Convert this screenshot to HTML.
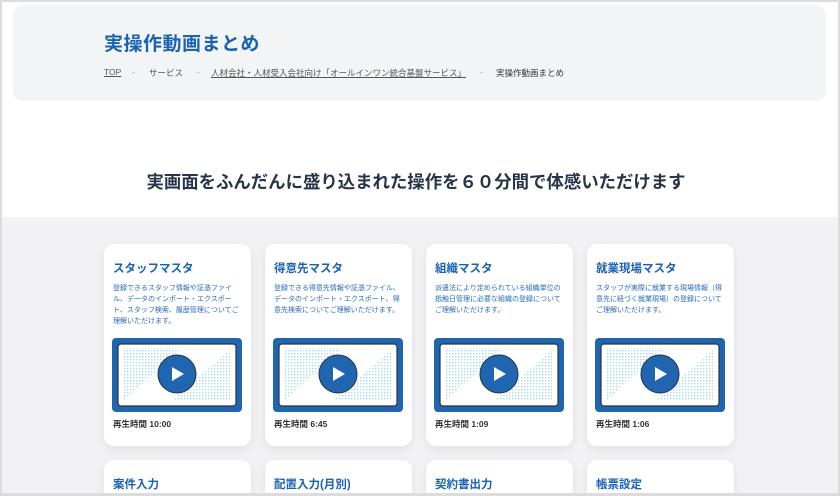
<!DOCTYPE html>
<html><head><meta charset="utf-8"><style>
*{margin:0;padding:0;box-sizing:border-box}
html,body{width:840px;height:496px;overflow:hidden}
body{background:#fff;font-family:"Liberation Sans","Noto Sans CJK JP",sans-serif;position:relative}
.frame{position:absolute;left:0;top:0;width:840px;height:496px;border:2px solid #dcdcdc;border-bottom-width:3px;pointer-events:none;z-index:5}
.hdr{position:absolute;left:13px;top:5px;width:813px;height:96px;background:#f3f4f6;border-radius:10px}
.ttl{position:absolute;left:104px;top:29px;font-size:19px;font-weight:bold;color:#1a62b3;letter-spacing:0.5px;white-space:nowrap}
.bc{position:absolute;left:104px;top:67px;font-size:8.5px;color:#555;white-space:nowrap}
.bc span{position:absolute;white-space:nowrap}
.u{text-decoration:underline;color:#555}
.h2{position:absolute;left:0;width:832px;top:169px;text-align:center;font-size:17.4px;letter-spacing:0;font-weight:bold;color:#283548;white-space:nowrap}
.sec{position:absolute;left:0;top:217px;width:840px;height:279px;background:#f2f2f4}
.card{position:absolute;width:147px;background:#fff;border-radius:10px;box-shadow:0 3px 10px rgba(0,0,0,.08)}
.card h3{position:absolute;left:9px;top:16px;font-size:11.5px;color:#1a62b3;font-weight:bold;white-space:nowrap}
.card p{position:absolute;left:9px;top:39px;width:130px;font-size:7px;line-height:11px;color:#2a6bb8}
.vid{position:absolute;left:8px;top:94px;width:130px;height:74px;background:#1f65b0;border-radius:4px}
.vid svg{position:absolute;left:0;top:0}
.tm{position:absolute;left:9px;top:174px;font-size:8.5px;font-weight:bold;color:#333;white-space:nowrap}
</style></head><body>
<div class="frame"></div>
<div class="hdr"></div>
<div class="ttl">実操作動画まとめ</div>
<div class="bc">
<span class="u" style="left:0">TOP</span>
<span style="left:28px;color:#999">-</span>
<span style="left:45px">サービス</span>
<span style="left:93px;color:#999">-</span>
<span class="u" style="left:107px">人材会社・人材受入会社向け「オールインワン統合基盤サービス」</span>
<span style="left:376px;color:#999">-</span>
<span style="left:392px;color:#333">実操作動画まとめ</span>
</div>
<div class="h2">実画面をふんだんに盛り込まれた操作を６０分間で体感いただけます</div>
<div class="sec"></div>

<svg width="0" height="0" style="position:absolute"><defs>
<pattern id="dots" width="3" height="3" patternUnits="userSpaceOnUse"><rect width="1.4" height="1.4" fill="#a9dbe6"/></pattern>
<symbol id="v" viewBox="0 0 130 74">
<rect x="6" y="6" width="118" height="62" rx="3" fill="#fff" stroke="#2a3340" stroke-width="1.2"/>
<polygon points="12,10 70,10 12,62" fill="url(#dots)"/>
<polygon points="118,12 118,62 60,62" fill="url(#dots)"/>
<circle cx="65" cy="36" r="19" fill="#1f65b0" stroke="#2a3340" stroke-width="1"/>
<polygon points="60,29 60,43 72,36" fill="#fff"/>
</symbol></defs></svg>

<div class="card" style="left:104px;top:244px;height:202px">
<h3>スタッフマスタ</h3>
<p>登録できるスタッフ情報や証憑ファイル、データのインポート・エクスポート、スタッフ検索、履歴管理についてご理解いただけます。</p>
<div class="vid"><svg width="130" height="74"><use href="#v"/></svg></div>
<div class="tm">再生時間 10:00</div></div>

<div class="card" style="left:265px;top:244px;height:202px">
<h3>得意先マスタ</h3>
<p>登録できる得意先情報や証憑ファイル、データのインポート・エクスポート、得意先検索についてご理解いただけます。</p>
<div class="vid"><svg width="130" height="74"><use href="#v"/></svg></div>
<div class="tm">再生時間 6:45</div></div>

<div class="card" style="left:426px;top:244px;height:202px">
<h3>組織マスタ</h3>
<p>派遣法により定められている組織単位の抵触日管理に必要な組織の登録についてご理解いただけます。</p>
<div class="vid"><svg width="130" height="74"><use href="#v"/></svg></div>
<div class="tm">再生時間 1:09</div></div>

<div class="card" style="left:587px;top:244px;height:202px">
<h3>就業現場マスタ</h3>
<p>スタッフが実際に就業する現場情報（得意先に紐づく就業現場）の登録についてご理解いただけます。</p>
<div class="vid"><svg width="130" height="74"><use href="#v"/></svg></div>
<div class="tm">再生時間 1:06</div></div>

<div class="card" style="left:104px;top:460px;height:36px;border-radius:10px 10px 0 0"><h3>案件入力</h3></div>
<div class="card" style="left:265px;top:460px;height:36px;border-radius:10px 10px 0 0"><h3>配置入力(月別)</h3></div>
<div class="card" style="left:426px;top:460px;height:36px;border-radius:10px 10px 0 0"><h3>契約書出力</h3></div>
<div class="card" style="left:587px;top:460px;height:36px;border-radius:10px 10px 0 0"><h3>帳票設定</h3></div>
</body></html>
